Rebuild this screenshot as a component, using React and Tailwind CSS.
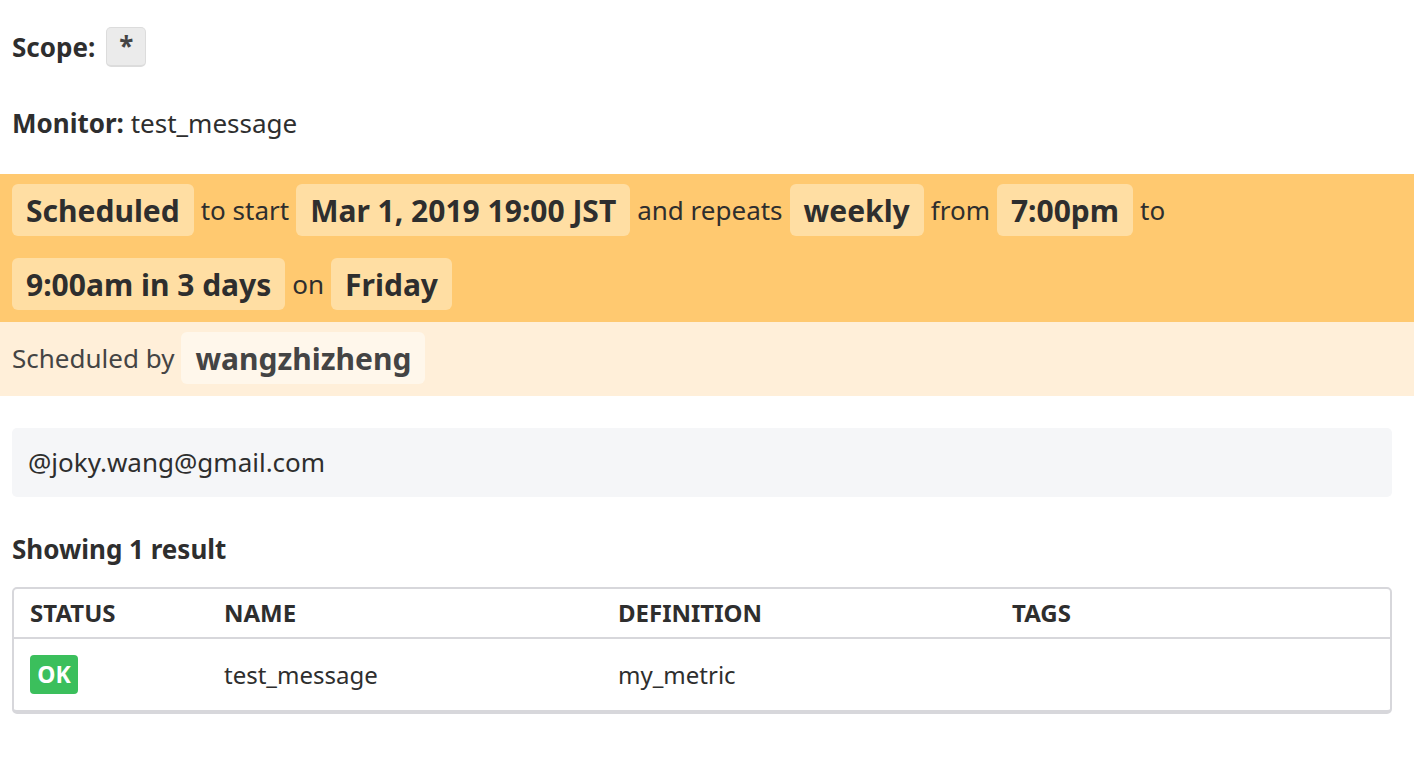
export default function App() {
  const pill = "inline-flex items-center h-[52px] px-[14px] rounded-[6px] bg-[#ffdea3] font-bold text-[30px]";
  return (
    <div className="min-h-screen bg-white text-[#2e2e2e] font-['Noto_Sans',sans-serif]">
      <div className="px-3 pt-[27px] flex items-center gap-[11px]">
        <span className="font-bold text-[26px] leading-[36px]">Scope:</span>
        <span className="inline-flex items-center justify-center w-[40px] h-[40px] rounded-[5px] bg-[#ebebeb] border border-[#dcdcdc] border-b-[2px] text-[26px] font-bold text-[#444]">*</span>
      </div>
      <div className="px-3 mt-[38px] text-[26px] leading-[36px]">
        <span className="font-bold">Monitor:</span> test_message
      </div>
      <div className="mt-[33px] bg-[#ffc970] px-3 pt-[10px] pb-[12px] flex flex-wrap items-center gap-x-[7px] gap-y-[22px] text-[26px]">
        <span className={pill}>Scheduled</span>
        <span>to start</span>
        <span className={pill}>Mar 1, 2019 19:00 JST</span>
        <span>and repeats</span>
        <span className={pill}>weekly</span>
        <span>from</span>
        <span className={pill}>7:00pm</span>
        <span>to</span>
        <span className={pill}>9:00am in 3 days</span>
        <span>on</span>
        <span className={pill}>Friday</span>
      </div>
      <div className="bg-[#ffefd9] px-3 pt-[10px] pb-[12px] flex items-center gap-[7px] text-[26px] text-[#444]">
        <span>Scheduled by</span>
        <span className="inline-flex items-center h-[52px] px-[14px] rounded-[6px] bg-[#fff7eb] font-bold text-[30px] text-[#444]">wangzhizheng</span>
      </div>
      <div className="ml-3 mr-[22px] mt-[32px] h-[69px] rounded-[5px] bg-[#f5f6f8] px-4 flex items-center text-[26px]">
        @joky.wang@gmail.com
      </div>
      <div className="px-3 mt-[34px] font-bold text-[26px] leading-[36px]">Showing 1 result</div>
      <div className="ml-3 mr-[22px] mt-[20px] border-2 border-b-[4px] border-[#d7d7db] rounded-[5px] overflow-hidden">
        <div className="grid grid-cols-[192px_394px_394px_1fr] h-[50px] items-center border-b-2 border-[#d7d7db] font-bold text-[24px] uppercase">
          <div className="pl-[16px]">Status</div>
          <div className="pl-[18px]">Name</div>
          <div className="pl-[18px]">Definition</div>
          <div className="pl-[18px]">Tags</div>
        </div>
        <div className="grid grid-cols-[192px_394px_394px_1fr] h-[71px] items-center text-[24px]">
          <div className="pl-[16px]">
            <span className="inline-flex items-center justify-center w-[48px] h-[39px] rounded-[4px] bg-[#3bbf5c] text-white font-bold text-[23px]">OK</span>
          </div>
          <div className="pl-[18px]">test_message</div>
          <div className="pl-[18px]">my_metric</div>
          <div className="pl-[18px]"></div>
        </div>
      </div>
    </div>
  );
}
